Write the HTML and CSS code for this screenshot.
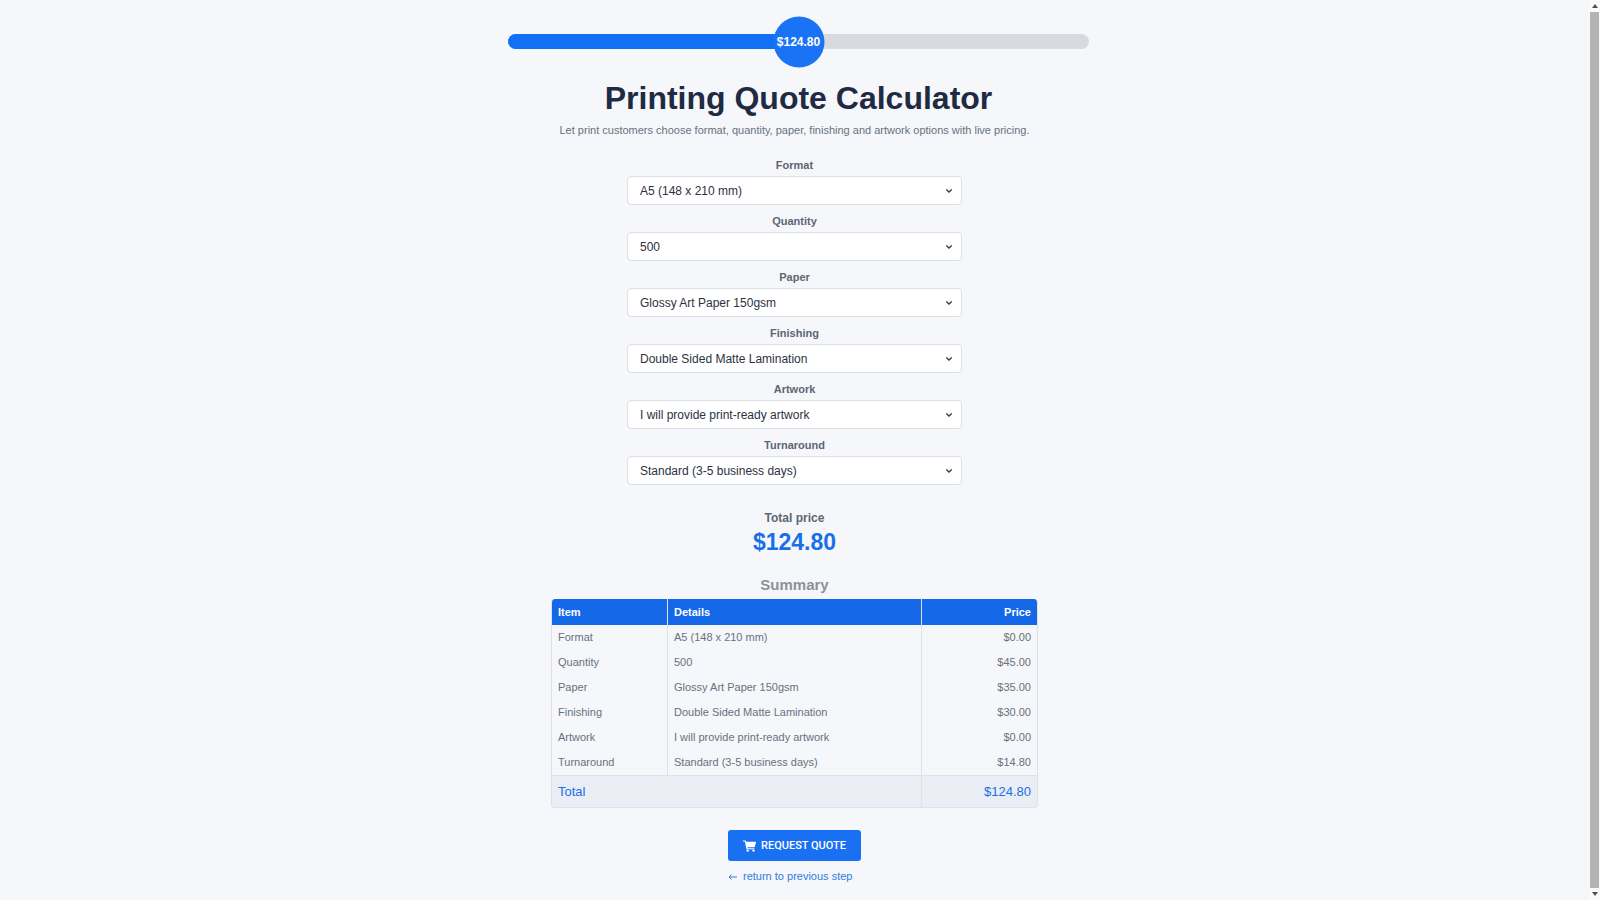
FILE: index.html
```html
<!DOCTYPE html>
<html lang="en">
<head>
<meta charset="utf-8">
<meta name="viewport" content="width=device-width, initial-scale=1">
<title>Printing Quote Calculator</title>
<link rel="stylesheet" href="styles.css">
</head>
<body>
<div class="page">
  <main class="content">
    <header class="header">
      <div class="progress">
        <div class="progress-fill"><span class="progress-badge">$124.80</span></div>
      </div>
      <h1 class="title">Printing Quote Calculator</h1>
    </header>
    <p class="subtitle">Let print customers choose format, quantity, paper, finishing and artwork options with live pricing.</p>

    <form class="form">
      <div class="field">
        <label for="format">Format</label>
        <select id="format"><option>A5 (148 x 210 mm)</option></select>
      </div>
      <div class="field">
        <label for="quantity">Quantity</label>
        <select id="quantity"><option>500</option></select>
      </div>
      <div class="field">
        <label for="paper">Paper</label>
        <select id="paper"><option>Glossy Art Paper 150gsm</option></select>
      </div>
      <div class="field">
        <label for="finishing">Finishing</label>
        <select id="finishing"><option>Double Sided Matte Lamination</option></select>
      </div>
      <div class="field">
        <label for="artwork">Artwork</label>
        <select id="artwork"><option>I will provide print-ready artwork</option></select>
      </div>
      <div class="field">
        <label for="turnaround">Turnaround</label>
        <select id="turnaround"><option>Standard (3-5 business days)</option></select>
      </div>
    </form>

    <section class="total">
      <div class="total-label">Total price</div>
      <div class="total-value">$124.80</div>
    </section>

    <h2 class="summary-title">Summary</h2>
    <table class="summary">
      <colgroup><col class="col-item"><col><col class="col-price"></colgroup>
      <thead>
        <tr><th>Item</th><th>Details</th><th>Price</th></tr>
      </thead>
      <tbody>
        <tr><td>Format</td><td>A5 (148 x 210 mm)</td><td>$0.00</td></tr>
        <tr><td>Quantity</td><td>500</td><td>$45.00</td></tr>
        <tr><td>Paper</td><td>Glossy Art Paper 150gsm</td><td>$35.00</td></tr>
        <tr><td>Finishing</td><td>Double Sided Matte Lamination</td><td>$30.00</td></tr>
        <tr><td>Artwork</td><td>I will provide print-ready artwork</td><td>$0.00</td></tr>
        <tr><td>Turnaround</td><td>Standard (3-5 business days)</td><td>$14.80</td></tr>
      </tbody>
      <tfoot>
        <tr><td colspan="2">Total</td><td>$124.80</td></tr>
      </tfoot>
    </table>

    <div class="actions">
      <button type="button" class="submit">
        <svg class="cart" viewBox="0 0 13 12" aria-hidden="true"><path d="M0 .4h2.300c.4 0 .6.2.7.6l.2.8h9.400c.3 0 .5.3.4.6l-1.100 4.200c-.1.4-.4.6-.8.6H4.500l.2 1h6.700v1H4c-.4 0-.6-.2-.7-.6L1.900 1.500H0z"/><circle cx="4.700" cy="10.600" r="1.200"/><circle cx="10.500" cy="10.600" r="1.200"/></svg>
        REQUEST QUOTE
      </button>
      <a class="back" href="#">
        <svg class="arrow" viewBox="0 0 10 8" aria-hidden="true"><path d="M9 4H1M3.500 1.500 1 4l2.500 2.500"/></svg>
        return to previous step
      </a>
    </div>
  </main>
  <div class="scrollbar" aria-hidden="true">
    <svg viewBox="0 0 6 4"><path d="M3 0 6 4H0z"/></svg>
    <div class="thumb"></div>
    <svg viewBox="0 0 6 4"><path d="M0 0h6L3 4z"/></svg>
  </div>
</div>
</body>
</html>
```
FILE: styles.css
```css
* { box-sizing: border-box; }

body {
  margin: 0;
  background: #f5f7fb;
  color: #6a717b;
  font: 11px/15px "Liberation Sans", Arial, sans-serif;
}

.page { display: flex; min-height: 100vh; }

.content {
  flex: 1;
  display: flex;
  flex-direction: column;
  align-items: center;
  padding: 34px 16px 8px;
}

.header {
  display: flex;
  flex-direction: column;
  align-items: center;
  width: 100%;
  padding-left: 8px;
}

.progress {
  width: 100%;
  max-width: 581px;
  height: 15px;
  border-radius: 8px;
  background: #d7dbe0;
}

.progress-fill {
  position: relative;
  width: 50%;
  height: 100%;
  border-radius: 8px;
  background: #1270f5;
}

.progress-badge {
  position: absolute;
  top: 50%;
  right: 0;
  transform: translate(50%, -50%);
  display: grid;
  place-items: center;
  width: 51px;
  height: 51px;
  border-radius: 50%;
  background: #1a73f5;
  color: #fff;
  font-size: 12px;
  font-weight: bold;
}

.title {
  margin: 29px 0 0;
  color: #1f2b43;
  font-size: 32px;
  line-height: 40px;
}

.subtitle { margin: 5px 0 0; }

.form {
  display: flex;
  flex-direction: column;
  gap: 9px;
  width: 100%;
  max-width: 335px;
  margin-top: 20px;
}

.field { display: flex; flex-direction: column; gap: 3px; }

.field label {
  color: #5d6672;
  font-weight: bold;
  text-align: center;
}

.field select {
  appearance: none;
  height: 29px;
  padding: 0 32px 0 12px;
  border: 1px solid #dcdfe4;
  border-radius: 4px;
  background: #fff url("data:image/svg+xml,%3Csvg xmlns='http://www.w3.org/2000/svg' viewBox='0 0 8 6'%3E%3Cpath d='M1.200 1.500 4 4 6.800 1.500' fill='none' stroke='%23394150' stroke-width='1.400'/%3E%3C/svg%3E") no-repeat right 8px center / 8px 6px;
  color: #2b3240;
  font: 12px "Liberation Sans", Arial, sans-serif;
}

.total { margin-top: 26px; text-align: center; }

.total-label { color: #5d6672; font-size: 12px; font-weight: bold; }

.total-value {
  margin-top: 1px;
  color: #1a6fe8;
  font-size: 23px;
  font-weight: bold;
  line-height: 30px;
}

.summary-title {
  margin: 18px 0 4px;
  color: #8b929c;
  font-size: 15px;
  line-height: 20px;
}

.summary {
  width: 100%;
  max-width: 487px;
  table-layout: fixed;
  border: 1px solid #dde1e8;
  border-top: 0;
  border-radius: 4px;
  border-spacing: 0;
  overflow: hidden;
}

.col-item { width: 115px; }
.col-price { width: 116px; }

.summary th,
.summary td {
  height: 25px;
  padding: 0 6px;
  border-left: 1px solid #dde1e8;
  text-align: left;
}

.summary th { height: 26px; background: #1468e8; color: #fff; }

.summary th:first-child,
.summary td:first-child { border-left: 0; }

.summary th:last-child,
.summary td:last-child { text-align: right; }

.summary tfoot td {
  height: 32px;
  border-top: 1px solid #dde1e8;
  background: #eaedf4;
  color: #1a6fe8;
  font-size: 13px;
}

.actions {
  display: flex;
  flex-direction: column;
  align-items: flex-start;
  gap: 8px;
  margin-top: 22px;
}

.submit {
  display: flex;
  align-items: center;
  gap: 5px;
  height: 31px;
  padding: 0 15px;
  border: 0;
  border-radius: 3px;
  background: #1a70f3;
  color: #fff;
  font: 500 11px Roboto, Arial, sans-serif;
}

.cart { width: 13px; height: 12px; fill: #fff; }

.back {
  display: flex;
  align-items: center;
  gap: 5px;
  color: #2f7be0;
  text-decoration: none;
}

.arrow { width: 10px; height: 8px; fill: none; stroke: #2f7be0; }

.scrollbar {
  display: flex;
  flex-direction: column;
  align-items: center;
  gap: 4px;
  width: 11px;
  padding: 4px 1px;
  background: #fafafa;
}

.scrollbar svg { width: 6px; height: 4px; fill: #505050; }

.thumb { flex: 1; width: 100%; background: #b4b4b4; }
```
